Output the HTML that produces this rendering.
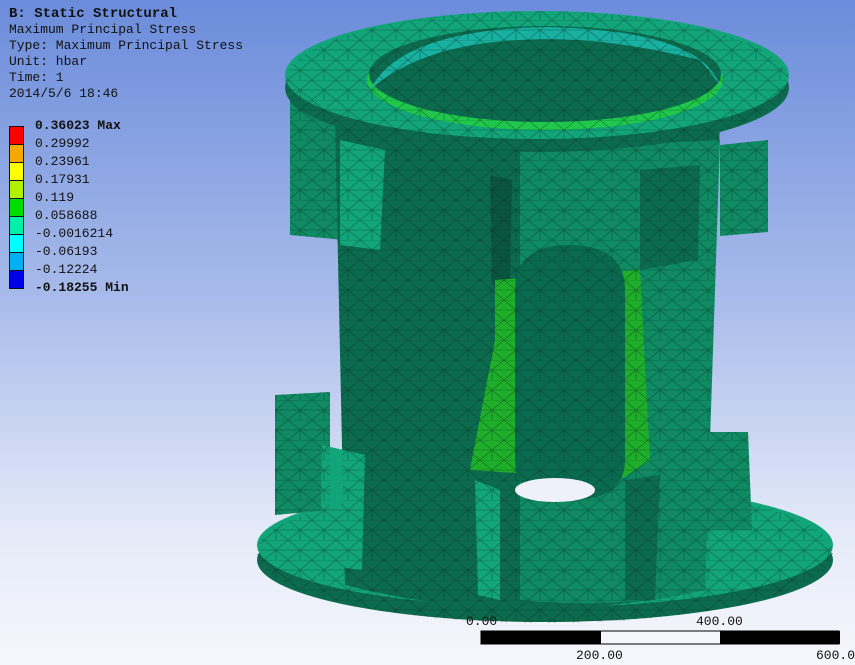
<!DOCTYPE html>
<html><head><style>
html,body{margin:0;padding:0}
body{width:855px;height:665px;overflow:hidden;position:relative;background:linear-gradient(#6b8cdb 0%,#a8bbea 45%,#e4eaf8 80%,#f6f7fc 100%);font-family:"Liberation Mono","Noto Sans CJK SC",monospace;}
.t{position:absolute;left:9px;font-size:13px;line-height:16px;color:#111;white-space:pre}
.lg{position:absolute;left:9px;top:126px;width:15px}
.lg div{height:17px;border:1px solid #111;border-top:none}
.lv{position:absolute;left:35px;font-size:13px;color:#111;line-height:18px}
.sc{position:absolute;font-size:13px;color:#111}
</style></head><body>
<svg width="855" height="665" style="position:absolute;left:0;top:0">
<defs>
<pattern id="m" width="24" height="20" patternUnits="userSpaceOnUse">
<path d="M0 0L24 0M0 10L24 10M0 0L12 10L24 0M0 20L12 10L24 20M12 10L12 20" stroke="#062a1c" stroke-width="0.6" fill="none"/>
</pattern>
<clipPath id="c">
<ellipse cx="545" cy="553" rx="288" ry="70"/>
<path d="M275 395L330 392L330 510L275 515Z"/>
<path d="M705 432L748 432L752 530L705 530Z"/>
<path d="M290 90L345 95L345 240L290 235Z"/>
<path d="M720 145L768 140L768 232L720 236Z"/>
<path d="M335 120L720 120L705 590Q520 630 345 585Z"/>
<ellipse cx="537" cy="82" rx="252" ry="71"/>
</clipPath>
</defs>
<g>
<ellipse cx="545" cy="560" rx="288" ry="62" fill="#0c6b4e"/>
<ellipse cx="545" cy="545" rx="288" ry="62" fill="#13a57a"/>
<path d="M275 395L330 392L330 510L275 515Z" fill="#0f8a63"/>
<path d="M705 432L748 432L752 530L705 530Z" fill="#0f8a63"/>
<path d="M290 90L345 95L345 240L290 235Z" fill="#0f8a63"/>
<path d="M720 145L768 140L768 232L720 236Z" fill="#0f8a63"/>
<path d="M335 120L720 120L705 590Q520 630 345 585Z" fill="#0c6b4e"/>
<path d="M520 150L720 140L705 590Q620 610 520 600Z" fill="#0f8a63"/>
<path d="M340 140L385 150L380 250L340 245Z" fill="#13a57a"/>
<path d="M640 170L700 165L698 260L640 270Z" fill="#0c6b4e"/>
<path d="M322 445L365 455L362 570L320 565Z" fill="#13a57a"/>
<path d="M475 480L500 490L500 600L478 595Z" fill="#13a57a"/>
<path d="M625 480L660 475L655 600L625 600Z" fill="#0c6b4e"/>
<path d="M490 175L512 180L510 290L492 285Z" fill="#0a5540"/>
<path d="M495 280L640 270L650 460L620 480L470 470L495 340Z" fill="#1fae2a"/>
<path d="M515 290Q515 245 568 245Q625 245 625 290L625 460Q625 500 570 500Q515 500 515 460Z" fill="#0a6a50"/>
<ellipse cx="537" cy="88" rx="252" ry="64" fill="#0c6b4e"/>
<ellipse cx="537" cy="75" rx="252" ry="64" fill="#13a57a"/>
<ellipse cx="545" cy="80" rx="178" ry="50" fill="#1fc84a"/>
<ellipse cx="545" cy="74" rx="176" ry="48" fill="#0c6b4e"/>
<path d="M370 90Q400 30 545 27Q700 30 720 85L700 60Q600 35 520 40Q420 45 370 90Z" fill="#18b0a0"/>
</g>
<rect x="255" y="0" width="600" height="625" fill="url(#m)" opacity="0.55" clip-path="url(#c)"/>
<ellipse cx="555" cy="490" rx="40" ry="12" fill="#eef1fa"/>
<rect x="481" y="631" width="358" height="13" fill="#f5f6fb" stroke="#000"/>
<rect x="481" y="631" width="120" height="13" fill="#000"/>
<rect x="720" y="631" width="120" height="13" fill="#000"/>
</svg>
<div class="t" style="top:6px;font-weight:bold;font-size:14px">B: Static Structural</div>
<div class="t" style="top:22px">Maximum Principal Stress
Type: Maximum Principal Stress
Unit: hbar
Time: 1
2014/5/6 18:46</div>
<div class="lg" style="border-top:1px solid #111">
<div style="background:#f00"></div><div style="background:#f7a800"></div><div style="background:#ff0"></div><div style="background:#b0f000"></div><div style="background:#0d0"></div><div style="background:#00f0a8"></div><div style="background:#0ff"></div><div style="background:#00b0f0"></div><div style="background:#0000e8"></div>
</div>
<div class="lv" style="top:117px"><b>0.36023 Max</b><br>0.29992<br>0.23961<br>0.17931<br>0.119<br>0.058688<br>-0.0016214<br>-0.06193<br>-0.12224<br><b>-0.18255 Min</b></div>
<div class="sc" style="left:466px;top:614px">0.00</div>
<div class="sc" style="left:696px;top:614px">400.00</div>
<div class="sc" style="left:576px;top:648px">200.00</div>
<div class="sc" style="left:816px;top:648px">600.00</div>
</body></html>
